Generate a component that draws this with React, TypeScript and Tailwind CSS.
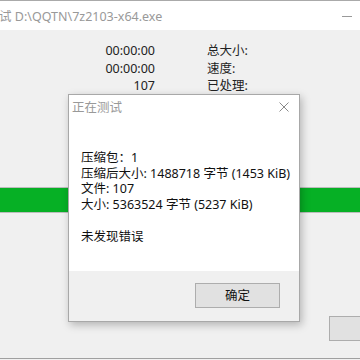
import React from "react";

const font = { fontFamily: '"Noto Sans", "Noto Sans CJK SC", sans-serif' };

export default function App() {
  return (
    <div className="relative w-[360px] h-[360px] overflow-hidden bg-[#f0f0f0] text-[12.5px] text-black" style={font}>
      <div className="flex flex-col h-full">
        <div className="h-[30px] bg-white border-t border-[#aaaaaa] flex items-center justify-between">
          <span className="text-[#999999] text-[12.5px] leading-[16px] ml-[-1px] mt-[2px]">试 D:\QQTN\7z2103-x64.exe</span>
          <span className="w-[10px] h-[1px] bg-[#999999] mr-[8px] mt-[1px]" />
        </div>
        <div className="flex pt-[12px]">
          <div className="w-[155px] flex flex-col items-end leading-[17.5px] text-[#222]">
            <span>00:00:00</span>
            <span>00:00:00</span>
            <span>107</span>
          </div>
          <div className="ml-[52px] flex flex-col leading-[17.5px] text-[#222]">
            <span>总大小:</span>
            <span>速度:</span>
            <span>已处理:</span>
          </div>
        </div>
        <div className="mt-[92px] h-[26px] border-y border-[#bcbcbc] bg-[#06b025]" />
        <div className="flex-1 flex justify-end pt-[103px]">
          <div className="w-[31px] h-[25px] border border-r-0 border-[#adadad] bg-[#e1e1e1]" />
        </div>
        <div className="h-[2px] border-t border-[#a0a0a0] bg-[#f0f0f0]" />
      </div>

      <div className="absolute left-[68px] top-[94px] w-[232px] h-[228px] border border-[#a8a8a8] bg-white shadow-[2px_3px_8px_rgba(0,0,0,0.25)] flex flex-col">
        <div className="h-[30px] flex items-start justify-between">
          <span className="text-[#999999] leading-[16px] mt-[5px] ml-[3px]">正在测试</span>
          <svg width="10" height="10" viewBox="0 0 10 10" className="mt-[7px] mr-[10px]">
            <path d="M0.5 0.5 L9.5 9.5 M9.5 0.5 L0.5 9.5" stroke="#8a8a8a" strokeWidth="1" fill="none" />
          </svg>
        </div>
        <div className="flex-1 pl-[12px] pt-[25px] text-[#111] leading-[15.5px] flex flex-col">
          <span>压缩包：1</span>
          <span>压缩后大小: 1488718 字节 (1453 KiB)</span>
          <span>文件: 107</span>
          <span>大小: 5363524 字节 (5237 KiB)</span>
          <span className="mt-[17px]">未发现错误</span>
        </div>
        <div className="h-[50px] bg-[#f0f0f0] flex justify-end items-start pt-[12px] pr-[19px]">
          <div className="w-[85px] h-[25px] border border-[#adadad] bg-[#e1e1e1] flex items-center justify-center text-[#111] leading-[16px]">确定</div>
        </div>
      </div>
    </div>
  );
}
